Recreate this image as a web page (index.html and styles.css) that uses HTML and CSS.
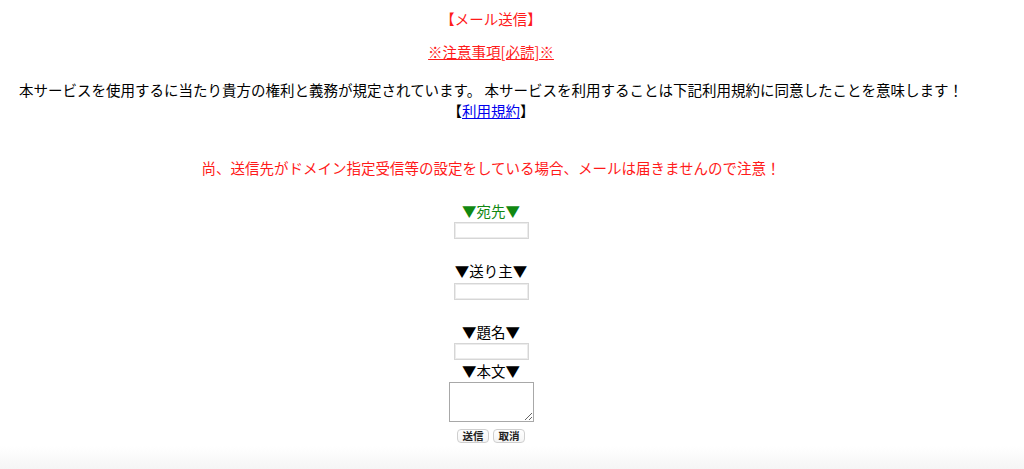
FILE: index.html
```html
<!DOCTYPE html>
<html lang="ja">
<head>
<meta charset="utf-8">
<title>メール送信</title>
<link rel="stylesheet" href="styles.css">
</head>
<body>
<div class="page">
  <div class="title">【メール送信】</div>
  <div class="notice"><a href="#" class="notice-link">※注意事項[必読]※</a></div>
  <div class="terms">
    <div>本サービスを使用するに当たり貴方の権利と義務が規定されています。 本サービスを利用することは下記利用規約に同意したことを意味します！</div>
    <div>【<a href="#" class="terms-link">利用規約</a>】</div>
  </div>
  <div class="warning">尚、送信先がドメイン指定受信等の設定をしている場合、メールは届きませんので注意！</div>
  <form class="mail-form">
    <div class="label label-to">▼宛先▼</div>
    <input type="text" class="field field-first">
    <div class="label label-gap">▼送り主▼</div>
    <input type="text" class="field field-second">
    <div class="label label-gap">▼題名▼</div>
    <input type="text" class="field field-first">
    <div class="label">▼本文▼</div>
    <textarea class="body-field"></textarea>
    <div class="buttons">
      <button type="button" class="btn">送信</button>
      <button type="button" class="btn">取消</button>
    </div>
  </form>
</div>
</body>
</html>
```

FILE: styles.css
```css
html {
  height: 100%;
  background: linear-gradient(to bottom, #ffffff 0, #ffffff 446px, #f5f5f5 469px);
}

body {
  margin: 8px;
  width: 966px;
  font-family: "Noto Sans CJK JP", "Noto Sans", sans-serif;
  font-size: 14.5px;
  line-height: 21px;
  color: #000;
  text-align: center;
}

.page {
  display: flex;
  flex-direction: column;
  align-items: stretch;
}

.title {
  color: #ff1a1a;
}

.notice {
  margin-top: 12px;
}

.notice-link {
  color: #ff1a1a;
  text-decoration: underline;
}

.terms {
  margin-top: 17px;
}

.terms-link {
  color: #0000ee;
  text-decoration: underline;
}

.warning {
  margin-top: 36px;
  color: #ff1a1a;
}

.mail-form {
  margin: 22px 0 0;
  display: flex;
  flex-direction: column;
  align-items: center;
}

.label {
  line-height: 21px;
}

.label-to {
  color: #118811;
}

.label-gap {
  margin-top: 21px;
}

.field {
  box-sizing: border-box;
  width: 75px;
  height: 17px;
  margin: 1px 0 0;
  padding: 0 2px;
  border: 1px solid #d6d6d6;
  box-shadow: inset 0 0 0 1px #ececec;
  background: #fff;
  font-size: 12px;
  outline: none;
}

.field-second {
  margin-top: 2px;
}

.body-field {
  box-sizing: border-box;
  width: 85px;
  height: 40px;
  margin: 1px 0 0;
  padding: 2px;
  border: 1px solid #a8a8a8;
  background: #fff;
  font-size: 12px;
  resize: both;
}

.buttons {
  margin-top: 7px;
  display: flex;
  gap: 4px;
}

.btn {
  box-sizing: border-box;
  width: 32px;
  height: 14px;
  padding: 0;
  border: 1px solid #cfcfcf;
  border-radius: 4px;
  background: linear-gradient(to bottom, #ffffff, #f4f4f4);
  font-family: "Noto Sans CJK JP", sans-serif;
  font-size: 10.5px;
  font-weight: bold;
  line-height: 12px;
  color: #222;
}
```
